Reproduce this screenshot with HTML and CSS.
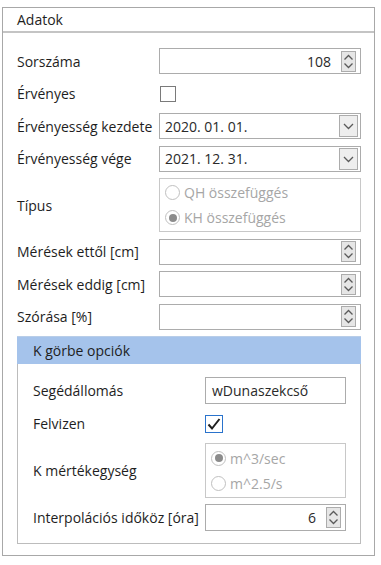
FILE: index.html
```html
<!DOCTYPE html>
<html>
<head>
<meta charset="utf-8">
<link rel="stylesheet" href="styles.css">
</head>
<body>
<div class="panel">
  <div class="panel-head">Adatok</div>
  <div class="panel-body">
    <div class="row">
      <div class="label">Sorszáma</div>
      <div class="field num">
        <span class="val">108</span>
        <span class="spin"><svg width="13" height="19" viewBox="0 0 13 19"><polyline points="2.5,7.5 6.5,3.5 10.5,7.5"/><polyline points="2.5,11.5 6.5,15.5 10.5,11.5"/></svg></span>
      </div>
    </div>
    <div class="row">
      <div class="label">Érvényes</div>
      <div class="ctrl"><span class="check"></span></div>
    </div>
    <div class="row">
      <div class="label">Érvényesség kezdete</div>
      <div class="field date">
        <span class="val">2020. 01. 01.</span>
        <span class="drop"><svg width="17" height="20" viewBox="0 0 17 20"><polyline points="4,8 8.5,12.5 13,8"/></svg></span>
      </div>
    </div>
    <div class="row">
      <div class="label">Érvényesség vége</div>
      <div class="field date">
        <span class="val">2021. 12. 31.</span>
        <span class="drop"><svg width="17" height="20" viewBox="0 0 17 20"><polyline points="4,8 8.5,12.5 13,8"/></svg></span>
      </div>
    </div>
    <div class="row tall">
      <div class="label">Típus</div>
      <div class="radios">
        <div class="radio"><span class="dot"></span>QH összefüggés</div>
        <div class="radio"><span class="dot on"></span>KH összefüggés</div>
      </div>
    </div>
    <div class="row">
      <div class="label">Mérések ettől [cm]</div>
      <div class="field num">
        <span class="val"></span>
        <span class="spin"><svg width="13" height="19" viewBox="0 0 13 19"><polyline points="2.5,7.5 6.5,3.5 10.5,7.5"/><polyline points="2.5,11.5 6.5,15.5 10.5,11.5"/></svg></span>
      </div>
    </div>
    <div class="row">
      <div class="label">Mérések eddig [cm]</div>
      <div class="field num">
        <span class="val"></span>
        <span class="spin"><svg width="13" height="19" viewBox="0 0 13 19"><polyline points="2.5,7.5 6.5,3.5 10.5,7.5"/><polyline points="2.5,11.5 6.5,15.5 10.5,11.5"/></svg></span>
      </div>
    </div>
    <div class="row">
      <div class="label">Szórása [%]</div>
      <div class="field num">
        <span class="val"></span>
        <span class="spin"><svg width="13" height="19" viewBox="0 0 13 19"><polyline points="2.5,7.5 6.5,3.5 10.5,7.5"/><polyline points="2.5,11.5 6.5,15.5 10.5,11.5"/></svg></span>
      </div>
    </div>
    <div class="sub">
      <div class="sub-head">K görbe opciók</div>
      <div class="sub-body">
        <div class="row srow">
          <div class="label slabel">Segédállomás</div>
          <div class="field text"><span class="val">wDunaszekcső</span></div>
        </div>
        <div class="row srow">
          <div class="label slabel">Felvizen</div>
          <div class="ctrl"><span class="check checked"><svg width="16" height="16" viewBox="0 0 16 16"><polyline points="2.5,8.5 6,12.5 13.5,3"/></svg></span></div>
        </div>
        <div class="row srow tall2">
          <div class="label slabel">K mértékegység</div>
          <div class="radios">
            <div class="radio"><span class="dot on"></span>m^3/sec</div>
            <div class="radio"><span class="dot"></span>m^2.5/s</div>
          </div>
        </div>
        <div class="row srow">
          <div class="label slabel">Interpolációs időköz [óra]</div>
          <div class="field num">
            <span class="val">6</span>
            <span class="spin"><svg width="13" height="19" viewBox="0 0 13 19"><polyline points="2.5,7.5 6.5,3.5 10.5,7.5"/><polyline points="2.5,11.5 6.5,15.5 10.5,11.5"/></svg></span>
          </div>
        </div>
      </div>
    </div>
  </div>
</div>
</body>
</html>
```
FILE: styles.css
```css
html, body {
  margin: 0;
  padding: 0;
  background: #ffffff;
}
body {
  font-family: "Open Sans", "Noto Sans", sans-serif;
  font-size: 14px;
  color: #1e1e1e;
}
.panel {
  margin: 7px 0 0 2px;
  width: 373px;
  height: 549px;
  border: 1px solid #a8a8a8;
  box-sizing: border-box;
  display: flex;
  flex-direction: column;
}
.panel-head {
  height: 25px;
  box-sizing: border-box;
  border-bottom: 2px solid #c4c4c4;
  padding-left: 14px;
  display: flex;
  align-items: center;
  line-height: 1;
}
.panel-body {
  padding: 15px 13px 0 14px;
  display: flex;
  flex-direction: column;
  gap: 6.5px;
}
.row {
  display: flex;
  align-items: center;
  height: 26px;
}
.row.tall { height: 54px; }
.label {
  width: 142px;
  flex: none;
  white-space: nowrap;
}
.field {
  flex: 1;
  height: 26px;
  box-sizing: border-box;
  border: 1px solid #acacac;
  background: #fff;
  display: flex;
  align-items: center;
}
.field .val {
  flex: 1;
  color: #2a2a2a;
}
.field.num .val {
  text-align: right;
  padding-right: 10px;
}
.field.date .val {
  padding-left: 5px;
}
.field.text .val {
  padding-left: 6px;
}
.spin {
  width: 13px;
  height: 19px;
  border: 1px solid #acacac;
  background: #e6e6e6;
  margin-right: 4px;
  display: flex;
}
.spin svg polyline, .drop svg polyline {
  fill: none;
  stroke: #5a5a5a;
  stroke-width: 1.3;
}
.drop {
  width: 17px;
  height: 20px;
  border: 1px solid #acacac;
  background: #eeeeee;
  margin-right: 2px;
  display: flex;
}
.ctrl {
  flex: 1;
  display: flex;
  align-items: center;
}
.check {
  width: 16px;
  height: 16px;
  box-sizing: border-box;
  border: 1px solid #7a7a7a;
  background: #fff;
  margin-left: 1px;
  display: flex;
}
.check.checked {
  width: 18px;
  height: 18px;
  border: 1.5px solid #2a73cc;
  margin-left: 0;
}
.check.checked svg polyline {
  fill: none;
  stroke: #202020;
  stroke-width: 2;
}
.radios {
  flex: 1;
  height: 100%;
  box-sizing: border-box;
  border: 1px solid #c8c8c8;
  display: flex;
  flex-direction: column;
  justify-content: center;
  gap: 7px;
  padding-left: 5px;
  color: #a6a6a6;
}
.radio {
  display: flex;
  align-items: center;
  height: 18px;
}
.dot {
  width: 15px;
  height: 15px;
  box-sizing: border-box;
  border: 1px solid #c0c0c0;
  border-radius: 50%;
  margin-right: 4px;
  display: flex;
  align-items: center;
  justify-content: center;
  background: #fff;
}
.dot.on::after {
  content: "";
  width: 8px;
  height: 8px;
  border-radius: 50%;
  background: #8c8c8c;
}
.sub {
  margin-top: 0;
  display: flex;
  flex-direction: column;
}
.sub-head {
  height: 28px;
  background: #a5c3eb;
  border-top: 1px solid #b8cde8;
  box-sizing: border-box;
  padding-left: 16px;
  display: flex;
  align-items: center;
}
.sub-body {
  border: 1px solid #bcbcbc;
  border-top: none;
  height: 180px;
  box-sizing: border-box;
  padding: 13px 14px 0 15px;
  display: flex;
  flex-direction: column;
  gap: 6px;
}
.srow { height: 27px; }
.srow.tall2 { height: 55px; }
.slabel { width: 172px; }
.srow .field { height: 27px; }
```
